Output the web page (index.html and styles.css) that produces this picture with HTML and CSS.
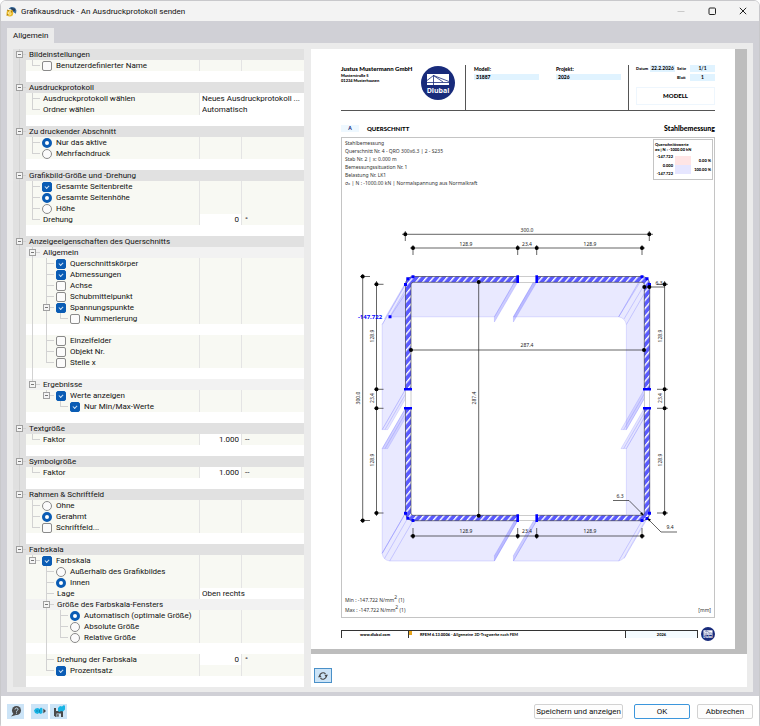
FILE: index.html
```
<!DOCTYPE html>
<html lang="de">
<head>
  <meta charset="UTF-8" />
  <meta name="viewport" content="width=device-width, initial-scale=1.0" />
  <title>Grafikausdruck - An Ausdruckprotokoll senden</title>
  <link rel="stylesheet" href="styles.css">
</head>
<body>
  <div class="window">
    <header class="titlebar">
      <svg class="app-icon" viewBox="0 0 20 20" aria-hidden="true">
        <path d="M5 5 C9 0 17 1 19 8 L18 14 L13 11 L12 7 Z" fill="#3d6d9c" />
        <path d="M8 3 L17 5 L16 9 L11 8 Z" fill="#25405f" />
        <circle cx="7" cy="13" r="6" fill="#e9b92b" />
        <path d="M2 7 L5 9 M12 8 L9 11 M1 17 L4 15" stroke="#a97b10" stroke-width="2" />
        <path d="M9 9 C5 9 4 12 5 15 C6 17 10 16 9 13 C8 12 6 12 5 14" fill="none" stroke="#fff3b8" stroke-width="1.5" />
      </svg>
      <h1>Grafikausdruck - An Ausdruckprotokoll senden</h1>
      <button class="win-button" aria-label="Minimieren" disabled>
        <svg viewBox="0 0 8 8"><path d="M0.5 4.5 H7.5" stroke="#c9c9c9" /></svg>
      </button>
      <button class="win-button" aria-label="Maximieren">
        <svg viewBox="0 0 8 8"><rect x="1" y="1" width="6.5" height="6.5" rx="1" fill="none" stroke="#222" /></svg>
      </button>
      <button class="win-button" aria-label="Schließen">
        <svg viewBox="0 0 8 8"><path d="M0.8 0.8 L7.2 7.2 M7.2 0.8 L0.8 7.2" stroke="#222" /></svg>
      </button>
    </header>

    <main class="content">
      <nav class="tabs"><button class="tab">Allgemein</button></nav>
      <div class="panel">
        <form class="tree" id="tree"></form>

        <section class="preview">
          <div class="canvas">
            <article class="paper">
              <header class="sheet-head">
                <div class="company">
                  <strong>Justus Mustermann GmbH</strong>
                  <span>Musterstraße 5</span>
                  <span>01234 Musterhausen</span>
                </div>
                <svg class="logo" viewBox="0 0 34 34">
                  <g id="dlubal">
                    <circle cx="17" cy="17" r="17" fill="#182b7b" />
                    <rect x="6" y="8" width="22" height="11" fill="#fff" />
                    <path d="M6 16.5 H28 M12.5 19 V9 M12.5 9.5 L6 14.5 M12.5 9.5 L22 16 M12.5 9.5 L28 15.5" stroke="#182b7b" stroke-width="0.8" fill="none" />
                    <text x="17" y="27" text-anchor="middle" class="logo-text">Dlubal</text>
                  </g>
                </svg>
                <dl class="model">
                  <div><dt>Modell:</dt><dd>31887</dd></div>
                  <div><dt>Projekt:</dt><dd>2026</dd></div>
                </dl>
                <div class="sheet-info">
                  <div class="info-grid">
                    <span>Datum</span><b>22.2.2026</b><span>Seite</span><b>1/1</b>
                    <span></span><i></i><span>Blatt</span><b>1</b>
                  </div>
                  <div class="sheet-type">MODELL</div>
                </div>
              </header>

              <div class="sheet-title">
                <span class="letter">A</span>
                <h2>QUERSCHNITT</h2>
                <h2 class="right">Stahlbemessung</h2>
              </div>

              <div class="frame">
                <div class="frame-top">
                  <p>Stahlbemessung<br>
                    Querschnitt Nr. 4 - QRO 300x6.3 | 2 - S235<br>
                    Stab Nr. 2 | x: 0.000 m<br>
                    Bemessungssituation Nr. 1<br>
                    Belastung Nr. LK1<br>
                    σ<sub>x</sub> | N : -1000.00 kN | Normalspannung aus Normalkraft</p>
                  <div class="legend">
                    <strong>Querschnittswerte</strong>
                    <strong>σ<sub>x</sub> | N : -1000.00 kN</strong>
                    <div class="scale">
                      <div class="ticks"><span>-147.722</span><span>0.000</span><span>-147.722</span></div>
                      <div class="swatches"><i class="pink"></i><i class="blue"></i></div>
                      <div class="percent"><span>0.00 %</span><span>100.00 %</span></div>
                    </div>
                  </div>
                </div>

                <svg class="drawing" viewBox="342 190 372 400">
                  <defs>
                    <pattern id="hatch" width="5.2" height="5.2" patternUnits="userSpaceOnUse" patternTransform="rotate(40)">
                      <rect width="5.2" height="5.2" fill="#5a5aff" />
                      <rect width="1.4" height="5.2" fill="#fff" />
                    </pattern>
                  </defs>

                  <!-- stress diagram, every wall pulled out by (-23.3, 40.3) -->
                  <g fill="#0000ff" fill-opacity="0.085" stroke="#7878ff" stroke-opacity="0.45" stroke-width="0.5">
                    <path d="M413 276.5 H517.7 L494.4 316.8 H389.7 Z" />
                    <path d="M536.7 276.5 H642 L618.7 316.8 H513.4 Z" />
                    <path d="M405.5 284.2 V389.3 L382.2 429.6 V324.5 Z" />
                    <path d="M405.5 408.3 V513 L382.2 553.3 V448.6 Z" />
                    <path d="M413 520.7 H517.7 L494.4 561 H389.7 Q383 560 382.2 553.3 L405.5 513 Z" />
                    <path d="M536.7 520.7 H642 L649.7 513 L626.4 553.3 Q625 559 618.7 561 H513.4 Z" />
                    <path d="M642 276.5 L649.7 284.2 V389.3 L626.4 429.6 V324.5 Q625 318 618.7 316.8 Z" />
                    <path d="M649.7 408.3 V513 L645 516 H626.4 V448.6 Z" />
                  </g>
                  <g fill="#0000ff" fill-opacity="0.2" stroke="#6c6cff" stroke-opacity="0.4" stroke-width="0.5">
                    <path d="M517.7 276.5 V282.3 L494.4 322 V316.8 Z" />
                    <path d="M536.7 276.5 V282.3 L513.4 322 V316.8 Z" />
                    <path d="M517.7 515.3 V520.7 L494.4 561 V555.6 Z" />
                    <path d="M536.7 515.3 V520.7 L513.4 561 V555.6 Z" />
                  </g>
                  <g fill="#0000ff" fill-opacity="0.1" stroke="#6c6cff" stroke-opacity="0.4" stroke-width="0.5">
                    <path d="M405.5 389.3 H411 L387.7 429.6 H382.2 Z" />
                    <path d="M405.5 408.3 H411 L387.7 448.6 H382.2 Z" />
                    <path d="M644.3 389.3 H649.7 L626.4 429.6 H621 Z" />
                    <path d="M644.3 408.3 H649.7 L626.4 448.6 H621 Z" />
                  </g>
                  <path class="ray" d="M405.5 284.2 L382.2 324.5 M407.8 279 L384.5 319 M413 282 L390 317 M408.3 389.3 L385 429.6 M408.3 408.3 L385 448.6 M647 389.3 L623.7 429.6 M647 408.3 L623.7 448.6 M642 279 L618.7 316.8 M646.5 281 L624 319 M649.7 284.2 L626.4 324.5 M405.5 513 L382.2 553.3 M407.8 518 L384.5 558.5 M413 520.7 L389.7 561 M642 520.7 L618.7 561 M647.5 518 L624 558.5" />

                  <!-- walls -->
                  <g fill="#fff" stroke="#999" stroke-width="0.5">
                    <rect x="517.7" y="276.5" width="19" height="5.8" />
                    <rect x="517.7" y="515.3" width="19" height="5.4" />
                    <rect x="405.5" y="389.3" width="5.5" height="19" />
                    <rect x="644.3" y="389.3" width="5.4" height="19" />
                  </g>
                  <g fill="url(#hatch)" stroke="#333" stroke-width="0.6">
                    <path d="M517.7 276.5 H413 A7.7 7.7 0 0 0 405.5 284.2 V389.3 H411 V284.5 Q411 282.3 413.2 282.3 H517.7 Z" />
                    <path d="M536.7 276.5 H642 A7.7 7.7 0 0 1 649.7 284.2 V389.3 H644.3 V284.5 Q644.3 282.3 642 282.3 H536.7 Z" />
                    <path d="M517.7 520.7 H413 A7.7 7.7 0 0 1 405.5 513 V408.3 H411 V513 Q411 515.3 413.2 515.3 H517.7 Z" />
                    <path d="M536.7 520.7 H642 A7.7 7.7 0 0 0 649.7 513 V408.3 H644.3 V513 Q644.3 515.3 642 515.3 H536.7 Z" />
                  </g>
                  <path stroke="#00f" stroke-width="2.6" d="M517.7 275.3 V283 M536.7 275.3 V283 M517.7 514.3 V522 M536.7 514.3 V522 M404 389.3 H412 M404 408.3 H412 M643 389.3 H651 M643 408.3 H651" />
                  <path class="points" d="M413 276.8 h0 M407.8 278.8 h0 M405.5 284.4 h0 M642 276.8 h0 M647 278.8 h0 M649.5 284.4 h0 M405.5 513.2 h0 M407.8 518.2 h0 M413 520.5 h0 M642 520.5 h0 M647 518.4 h0 M649.5 513.2 h0 M390 316.8 h0" />

                  <!-- dimensions -->
                  <path class="dim" d="M402 234.3 H653 M405.3 231 V241 M649.3 231 V241
                    M410 248 H645 M413 245 V255 M517.7 245 V255 M536.7 245 V255 M642 245 V255
                    M410 536 H645 M413 528 V539 M517.7 528 V539 M536.7 528 V539 M642 528 V539
                    M362.7 274 V523 M360 276.5 H370 M360 520.5 H370
                    M376.5 281 V516 M374 284.3 H383.5 M374 389.3 H383.5 M374 408.3 H383.5 M374 513 H383.5
                    M664.6 281 V516 M657 284.3 H668 M657 389.3 H668 M657 408.3 H668 M657 513 H668
                    M411 350 H644 M478.7 282 V516 M644 287 H665
                    M613 500.5 H629 L643 514.5 M648 519 L661 532 H677" />
                  <path d="M643.5 515.5 L640 514 L642 512 Z M647.5 518 L651 519.5 L649 521.5 Z" />
                  <path class="dots" d="M405.3 234.3 h0 M649.3 234.3 h0 M413 248 h0 M517.7 248 h0 M536.7 248 h0 M642 248 h0 M413 536 h0 M517.7 536 h0 M536.7 536 h0 M642 536 h0 M362.7 276.5 h0 M362.7 520.5 h0 M376.5 284.3 h0 M376.5 389.3 h0 M376.5 408.3 h0 M376.5 513 h0 M664.6 284.3 h0 M664.6 389.3 h0 M664.6 408.3 h0 M664.6 513 h0 M411 350 h0 M644 350 h0 M478.7 282 h0 M478.7 515.7 h0 M644.3 287 h0 M649.3 287 h0" />
                  <g class="dim-text">
                    <text x="527" y="232">300.0</text>
                    <text x="466" y="246">128.9</text>
                    <text x="527" y="246">23.4</text>
                    <text x="590" y="246">128.9</text>
                    <text x="527" y="347">287.4</text>
                    <text x="466" y="533">128.9</text>
                    <text x="527" y="533">23.4</text>
                    <text x="590" y="533">128.9</text>
                    <text x="659" y="285">6.3</text>
                    <text x="620" y="498">6.3</text>
                    <text x="670" y="529">9.4</text>
                    <text transform="translate(360 398) rotate(-90)">300.0</text>
                    <text transform="translate(374 336) rotate(-90)">128.9</text>
                    <text transform="translate(374 398) rotate(-90)">23.4</text>
                    <text transform="translate(374 460) rotate(-90)">128.9</text>
                    <text transform="translate(476 398) rotate(-90)">287.4</text>
                    <text transform="translate(662 336) rotate(-90)">128.9</text>
                    <text transform="translate(662 398) rotate(-90)">23.4</text>
                    <text transform="translate(662 460) rotate(-90)">128.9</text>
                    <text class="value" x="370" y="319">-147.722</text>
                  </g>
                </svg>

                <div class="frame-bottom">
                  <p>Min : -147.722 N/mm<sup>2</sup> (1)<br>Max : -147.722 N/mm<sup>2</sup> (1)</p>
                  <span>[mm]</span>
                </div>
              </div>

              <footer class="sheet-foot">
                <div class="foot-line">
                  <b class="foot-url">www.dlubal.com</b>
                  <span class="foot-program"><b>RFEM 6.13.0006</b> - Allgemeine 3D-Tragwerke nach FEM</span>
                  <b class="foot-year">2026</b>
                </div>
                <svg class="foot-logo" viewBox="0 0 34 34"><use href="#dlubal" /></svg>
              </footer>
            </article>
          </div>
          <div class="preview-bar">
            <button class="refresh" aria-label="Aktualisieren">
              <svg viewBox="0 0 12 12">
                <path d="M2 6 A4 4 0 0 1 9 3.5 M10 6 A4 4 0 0 1 3 8.5" fill="none" stroke="#444" stroke-width="1.4" />
                <path d="M7.5 4.5 H12 L10 7.5 Z M4.5 7.5 H0 L2 4.5 Z" fill="#444" />
              </svg>
            </button>
          </div>
        </section>
      </div>
    </main>

    <footer class="actions">
      <button class="tool" aria-label="Hilfe">
        <svg viewBox="0 0 12 12">
          <circle cx="6.5" cy="5.5" r="4.5" fill="#4a4a4a" />
          <path d="M4 8 L1 11.5 L6 10 Z" fill="#4a4a4a" />
          <path d="M5 4.5 C5 2.5 8.3 2.5 8 4.5 C7.8 5.5 6.5 5.5 6.5 6.8 M6.5 7.6 V8.6" fill="none" stroke="#cce4f7" />
        </svg>
      </button>
      <span class="tool-group">
        <button class="tool" aria-label="Einstellungen laden">
          <svg viewBox="0 0 12 12">
            <path d="M0 5.5 L1.5 3.5 L4 3 L5.5 4 L7 2.5 L8.5 3.5 V8 L6.5 9 L5 8 L3.5 9 L1 8 Z" fill="#18b4e4" />
            <path d="M2 6 H4 M5.5 5 V7.5" stroke="#0b7ea8" stroke-width="0.8" />
            <path d="M9.3 3.5 L12 6 L9.3 8.5 Z" fill="#444" />
          </svg>
        </button>
        <button class="tool" aria-label="Einstellungen speichern">
          <svg viewBox="0 0 12 12">
            <path d="M1 3 H10 V12 H2.5 L1 10.5 Z" fill="#4a4a4a" />
            <path d="M3 3 H7 V6 H3 Z M3.5 8.5 H8 V12 H3.5 Z" fill="#cce4f7" />
            <rect x="4.2" y="9.2" width="1.5" height="2.5" fill="#4a4a4a" />
            <path d="M5 3 L7 1 L9 1.5 L11 0 L12 1 V4.5 L10 6.5 L8 6 L6.5 7 L5 6 Z" fill="#18b4e4" />
          </svg>
        </button>
      </span>
      <span class="spacer"></span>
      <button class="btn">Speichern und anzeigen</button>
      <button class="btn primary">OK</button>
      <button class="btn">Abbrechen</button>
    </footer>
  </div>

  <script>
    // d = depth, t = type of control, box = row can be collapsed
    const rows = [
      { d: 0, label: 'Bildeinstellungen', box: true },
      { d: 1, label: 'Benutzerdefinierter Name', t: 'checkbox' },
      null,
      { d: 0, label: 'Ausdruckprotokoll', box: true },
      { d: 1, label: 'Ausdruckprotokoll wählen', select: 'Neues Ausdruckprotokoll ...' },
      { d: 1, label: 'Ordner wählen', select: 'Automatisch' },
      null,
      { d: 0, label: 'Zu druckender Abschnitt', box: true },
      { d: 1, label: 'Nur das aktive', t: 'radio', group: 'abschnitt', on: true },
      { d: 1, label: 'Mehrfachdruck', t: 'radio', group: 'abschnitt' },
      null,
      { d: 0, label: 'Grafikbild-Größe und -Drehung', box: true },
      { d: 1, label: 'Gesamte Seitenbreite', t: 'checkbox', on: true },
      { d: 1, label: 'Gesamte Seitenhöhe', t: 'radio', group: 'hoehe', on: true },
      { d: 1, label: 'Höhe', t: 'radio', group: 'hoehe' },
      { d: 1, label: 'Drehung', value: '0', unit: '°' },
      null,
      { d: 0, label: 'Anzeigeeigenschaften des Querschnitts', box: true },
      { d: 1, label: 'Allgemein', box: true, sub: true },
      { d: 2, label: 'Querschnittskörper', t: 'checkbox', on: true },
      { d: 2, label: 'Abmessungen', t: 'checkbox', on: true },
      { d: 2, label: 'Achse', t: 'checkbox' },
      { d: 2, label: 'Schubmittelpunkt', t: 'checkbox' },
      { d: 2, label: 'Spannungspunkte', t: 'checkbox', on: true, box: true },
      { d: 3, label: 'Nummerierung', t: 'checkbox' },
      null,
      { d: 2, label: 'Einzelfelder', t: 'checkbox' },
      { d: 2, label: 'Objekt Nr.', t: 'checkbox' },
      { d: 2, label: 'Stelle x', t: 'checkbox' },
      null,
      { d: 1, label: 'Ergebnisse', box: true, sub: true },
      { d: 2, label: 'Werte anzeigen', t: 'checkbox', on: true, box: true },
      { d: 3, label: 'Nur Min/Max-Werte', t: 'checkbox', on: true },
      null,
      { d: 0, label: 'Textgröße', box: true },
      { d: 1, label: 'Faktor', value: '1.000', unit: '--' },
      null,
      { d: 0, label: 'Symbolgröße', box: true },
      { d: 1, label: 'Faktor', value: '1.000', unit: '--' },
      null,
      { d: 0, label: 'Rahmen & Schriftfeld', box: true },
      { d: 1, label: 'Ohne', t: 'radio', group: 'rahmen' },
      { d: 1, label: 'Gerahmt', t: 'radio', group: 'rahmen', on: true },
      { d: 1, label: 'Schriftfeld...', t: 'checkbox' },
      null,
      { d: 0, label: 'Farbskala', box: true },
      { d: 1, label: 'Farbskala', t: 'checkbox', on: true, box: true },
      { d: 2, label: 'Außerhalb des Grafikbildes', t: 'radio', group: 'lage' },
      { d: 2, label: 'Innen', t: 'radio', group: 'lage', on: true },
      { d: 2, label: 'Lage', select: 'Oben rechts' },
      { d: 2, label: 'Größe des Farbskala-Fensters', box: true, sub: true },
      { d: 3, label: 'Automatisch (optimale Größe)', t: 'radio', group: 'groesse', on: true },
      { d: 3, label: 'Absolute Größe', t: 'radio', group: 'groesse' },
      { d: 3, label: 'Relative Größe', t: 'radio', group: 'groesse' },
      null,
      { d: 2, label: 'Drehung der Farbskala', value: '0', unit: '°' },
      { d: 2, label: 'Prozentsatz', t: 'checkbox', on: true },
      null
    ];

    // is there another row on this level further down?
    function goesOn(i, level) {
      for (let j = i + 1; j < rows.length; j++) {
        if (!rows[j] || rows[j].d > level) continue;
        return rows[j].d === level;
      }
      return false;
    }

    function guides(i) {
      const row = rows[i];
      const next = rows.slice(i + 1).find(r => r);
      const depth = row ? row.d : (next ? next.d : 0);
      let html = '';
      for (let level = 0; level <= depth; level++) {
        let cls = 'guide';
        if (goesOn(i, level)) cls += ' down';
        if (row && level === depth && i > 0) cls += ' up';
        if (row && level === depth) cls += ' arm';
        html += `<span class="${cls}">${row && row.box && level === depth ? '<i class="fold"></i>' : ''}</span>`;
      }
      return html;
    }

    function renderRow(row, i) {
      const div = document.createElement('div');
      const id = 'row-' + i;
      div.className = 'row';
      if (!row) div.className += ' blank';
      else if (row.d === 0) div.className += ' section';
      else if (row.sub) div.className += ' sub';
      let html = guides(i);
      if (row) {
        if (row.t) {
          html += `<input type="${row.t}" id="${id}" name="${row.group || id}"${row.on ? ' checked' : ''}>`;
        }
        const tag = row.t || row.value || row.select ? 'label' : 'span';
        html += `<${tag} class="name"${tag === 'label' ? ` for="${id}"` : ''}>${row.label.replace('&', '&amp;')}</${tag}>`;
        if (row.select) {
          html += `<select class="pick" id="${id}"><option>${row.select}</option></select>`;
        } else if (row.d > 0 && !row.sub) {
          html += `<span class="cell">${row.value ? `<input type="text" id="${id}" value="${row.value}">` : ''}</span>`;
          html += `<span class="unit">${row.unit || ''}</span>`;
        }
      }
      div.innerHTML = html;
      return div;
    }

    const tree = document.getElementById('tree');
    rows.forEach((row, i) => tree.appendChild(renderRow(row, i)));
  </script>
</body>
</html>
```
FILE: styles.css
```
*, *::before, *::after { box-sizing: border-box; }
body { margin: 0; font-family: Roboto, "Noto Sans", sans-serif; font-size: 8px; line-height: 11px; color: #111; background: #fff; }
button, input, select { font: inherit; color: inherit; margin: 0; padding: 0; }
h1, h2, p, dl, dd { margin: 0; font-size: inherit; font-weight: inherit; }
svg { display: block; }
sub, sup { line-height: 0; }

.window { min-height: 100vh; display: flex; flex-direction: column; border: 1px solid #c8c8cb; border-radius: 6px; overflow: hidden; }

/* Title bar */
.titlebar { display: flex; align-items: center; height: 20px; padding: 0 1px 0 5px; background: #f3f3f3; }
.app-icon { width: 11px; height: 11px; margin-right: 4px; }
.titlebar h1 { flex: 1; }
.win-button { width: 31px; height: 20px; border: none; background: none; display: flex; align-items: center; justify-content: center; }
.win-button svg { width: 8px; height: 8px; }

/* Tab and panel */
.content { flex: 1; display: flex; flex-direction: column; padding: 7px 6px 4px; background: #d0d0d6; }
.tabs { display: flex; }
.tab { height: 15px; padding: 0 6px; border: none; background: #ebebeb; }
.panel { flex: 1; display: flex; gap: 7px; padding: 6px 6px 5px; background: #ebebeb; }

/* Settings tree */
.tree { flex: 0 0 291px; align-self: flex-start; background: linear-gradient(to right, #e0e0e0 13px, #fff 13px); }
.row { display: flex; align-items: center; height: 11px; background: linear-gradient(to right, #e0e0e0 13px, #f8f9f3 13px); }
.row.blank { background: none; }
.row.section { background: #e1e1e1; }
.row.sub { background: linear-gradient(to right, #e0e0e0 13px, #f2f2f2 13px); }
.guide { position: relative; flex: none; width: 14px; height: 11px; }
.guide:first-child { width: 13px; }
.guide::before, .guide::after { content: ""; position: absolute; }
.guide::before { left: 6px; width: 1px; background: #d2d2d2; }
.guide.up::before { top: 0; height: 6px; }
.guide.down::before { top: 0; bottom: 0; height: auto; }
.guide.arm::after { left: 6px; right: 0; top: 5px; height: 1px; background: #d2d2d2; }
.fold { position: absolute; z-index: 1; left: 3px; top: 2px; width: 7px; height: 7px; border: 1px solid #a0a0a0; background: linear-gradient(#777, #777) center / 3px 1px no-repeat #f4f4f4; }
.name { flex: 1; padding-left: 3px; white-space: nowrap; }
input[type=checkbox], input[type=radio] { appearance: none; flex: none; width: 10px; height: 10px; margin-left: 2px; border: 1px solid #8a8a8a; border-radius: 2px; background: #fbfbfb; }
input[type=radio] { border-radius: 50%; }
input[type=checkbox] + .name, input[type=radio] + .name { padding-left: 4px; }
input[type=checkbox]:checked { border-color: #0a5cb4; background: #0a5cb4; position: relative; }
input[type=checkbox]:checked::after { content: ""; position: absolute; left: 2px; top: 2px; width: 4px; height: 3px; border: solid #cfe2f5; border-width: 0 0 1px 1px; transform: rotate(-45deg); }
input[type=radio]:checked { border: 3px solid #0a5cb4; background: #fff; }
.cell { width: 42px; height: 11px; border-left: 1px solid #e4e4e4; }
.cell input { display: block; width: 100%; height: 11px; padding-right: 2px; border: none; background: #fff; text-align: right; }
.unit { width: 63px; height: 11px; padding-left: 3px; border-left: 1px solid #e4e4e4; }
.pick { appearance: none; width: 105px; height: 11px; padding-left: 2px; border: none; border-left: 1px solid #e4e4e4; border-radius: 0; background: #fff; }

/* Preview */
.preview { flex: 1; display: flex; flex-direction: column; background: #fff; }
.canvas { padding: 0 12px 5px 0; background: #bdbdbd; }
.paper { padding: 16px 20px 8px 30px; background: #fff; color: #000; font-family: Lato, sans-serif; font-size: 4px; line-height: 5px; }
.preview-bar { flex: 1; display: flex; align-items: flex-end; padding: 0 3px 4px; }
.refresh { width: 18px; height: 15px; border: 1px solid #4a90c8; background: #cce4f7; display: flex; align-items: center; justify-content: center; }
.refresh svg { width: 10px; height: 10px; }

.sheet-head { display: flex; height: 46px; border-bottom: 1px solid #555; }
.company { width: 80px; display: flex; flex-direction: column; }
.company strong { font-size: 6px; line-height: 8px; font-weight: 900; white-space: nowrap; }
.company span { font-weight: 900; }
.logo { width: 34px; height: 34px; margin: 1px 10px 0 0; flex: none; }
.logo-text { font: 700 7px "Open Sans", sans-serif; fill: #fff; }
.model { flex: 1; display: flex; gap: 17px; padding: 1px 7px 0 8px; border-left: 1px solid #555; font-weight: 900; }
.model div { flex: 1; }
.model dt, .model dd { font-size: 5px; line-height: 6px; }
.model dd { margin-top: 2px; padding-left: 2px; background: #e0f3ff; }
.sheet-info { width: 87px; padding: 0 0 5px 7px; border-left: 1px solid #555; display: flex; flex-direction: column; justify-content: space-between; }
.info-grid { display: grid; grid-template-columns: 12px 25px 11px 25px; column-gap: 2px; row-gap: 2px; line-height: 7px; font-weight: 900; }
.info-grid b { background: #e0f3ff; font-size: 5px; font-weight: 700; text-align: center; }
.sheet-type { border: 1px solid #eef6fd; font-size: 6px; line-height: 16px; font-weight: 900; text-align: center; }

.sheet-title { display: flex; align-items: center; gap: 8px; height: 26px; padding-top: 8px; font-size: 7px; }
.sheet-title h2 { font-size: 6px; font-weight: 900; }
.sheet-title .right { margin-left: auto; font-size: 7px; }
.letter { width: 18px; background: #eef8ff; color: #182b7b; font-size: 5px; line-height: 7px; font-weight: 900; text-align: center; }

.frame { border: 1px solid #c4c4c4; color: #333; font-family: "Noto Sans", "Open Sans", sans-serif; font-size: 5px; line-height: 8px; }
.frame-top { display: flex; justify-content: space-between; align-items: flex-start; height: 52px; padding: 1px 1px 0 3px; }
.frame-top sub { font-size: 4px; vertical-align: baseline; }
.legend { width: 60px; height: 41px; padding: 2px 1px; border: 1px solid #c4c4c4; color: #000; font-family: Lato, sans-serif; font-size: 4px; line-height: 5px; }
.legend strong { display: block; font-weight: 900; }
.scale { display: flex; gap: 2px; padding-top: 2px; font-weight: 900; }
.ticks, .percent { display: flex; flex-direction: column; align-items: flex-end; justify-content: space-between; height: 22px; }
.ticks { width: 18px; }
.percent { flex: 1; justify-content: center; gap: 4px; }
.swatches { padding-top: 2px; }
.swatches i { display: block; width: 16px; height: 9px; }
.pink { background: #ffe5e5; }
.blue { background: #e6e6ff; }

.drawing { width: 100%; height: auto; }
.ray { fill: none; stroke: #8080ff; stroke-opacity: 0.5; stroke-width: 0.7; }
.points { stroke: #00f; stroke-width: 3; stroke-linecap: square; }
.dim { fill: none; stroke: #222; stroke-width: 0.7; }
.dots { stroke: #000; stroke-width: 4; stroke-linecap: round; }
.dim-text { fill: #222; font-size: 5px; text-anchor: middle; }
.dim-text .value { fill: #00f; font-size: 6px; font-weight: 700; }

.frame-bottom { display: flex; justify-content: space-between; align-items: flex-end; padding: 5px 3px 2px; line-height: 10px; }
.frame-bottom sup { font-size: 5px; }

.sheet-foot { display: flex; align-items: center; gap: 3px; margin-top: 9px; }
.foot-line { flex: 1; display: flex; height: 8px; border: solid #333; border-width: 1px 1px 0; line-height: 7px; }
.foot-url { width: 66px; font-weight: 900; text-align: center; }
.foot-program { flex: 1; padding-left: 11px; border-left: 1px solid #333; background: linear-gradient(#e8a51c, #e8a51c) 0 0 / 3px 4px no-repeat; font-weight: 700; }
.foot-program b { font-weight: 900; }
.foot-year { width: 72px; border-left: 1px solid #333; background: #f4fbff; text-align: center; }
.foot-logo { width: 14px; height: 14px; }

/* Bottom buttons */
.actions { display: flex; align-items: center; height: 33px; padding: 0 6px 3px; background: #fff; }
.tool { width: 17px; height: 15px; border: none; background: #cce4f7; display: flex; align-items: center; justify-content: center; }
.tool svg { width: 12px; height: 12px; }
.tool-group { display: flex; gap: 2px; margin-left: 7px; }
.spacer { flex: 1; }
.btn { min-width: 56px; height: 15px; margin-left: 7px; padding: 0 1px; border: 1px solid #d2d2d2; border-radius: 2px; background: #fdfdfd; }
.btn.primary { border-color: #3c96dc; margin-left: 11px; }
```
